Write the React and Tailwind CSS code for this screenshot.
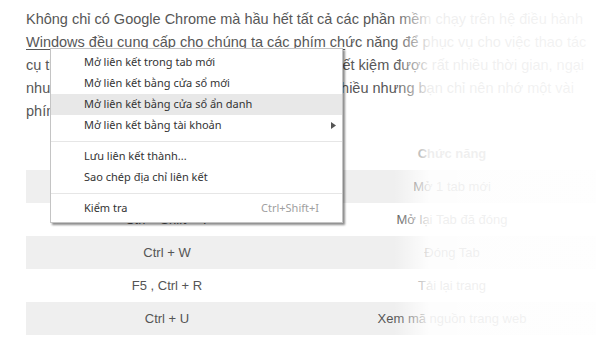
const lines = [
  'Không chỉ có Google Chrome mà hầu hết tất cả các phần mềm chạy trên hệ điều hành',
  null,
  'cụ thể hơn, nhanh chóng hơn và cũng giúp bạn tiết kiệm được rất nhiều thời gian, ngại',
  'nhu cầu sử dụng phím tắt của mỗi người có rất nhiều nhưng bạn chỉ nên nhớ một vài',
  'phím tắt dưới đây:',
]

const rows = [
  ['Ctrl + T', 'Mở 1 tab mới'],
  ['Ctrl + Shift + T', 'Mở lại Tab đã đóng'],
  ['Ctrl + W', 'Đóng Tab'],
  ['F5 , Ctrl + R', 'Tải lại trang'],
  ['Ctrl + U', 'Xem mã nguồn trang web'],
]

const menu = [
  { label: 'Mở liên kết trong tab mới' },
  { label: 'Mở liên kết bằng cửa sổ mới' },
  { label: 'Mở liên kết bằng cửa sổ ẩn danh', active: true },
  { label: 'Mở liên kết bằng tài khoản', sub: true },
  { sep: true },
  { label: 'Lưu liên kết thành...' },
  { label: 'Sao chép địa chỉ liên kết' },
  { sep: true },
  { label: 'Kiểm tra', hint: 'Ctrl+Shift+I' },
]

function ContextMenu() {
  return (
    <div className="absolute left-[50px] top-[48px] w-[293px] bg-white border border-[#c4c4c4] shadow-[2px_2px_2px_rgba(0,0,0,0.45)] py-[3px] font-['Noto_Sans',sans-serif] text-[11px] text-[#333]">
      {menu.map((item, i) =>
        item.sep ? (
          <div key={i} className="h-[10px] flex items-center">
            <div className="h-px w-full bg-[#e6e6e6]" />
          </div>
        ) : (
          <div
            key={i}
            className={`h-[21px] flex items-center pl-[33px] ${item.active ? 'bg-[#e8e8e8]' : ''}`}
          >
            <span className="flex-1">{item.label}</span>
            {item.hint && <span className="text-[#a0a0a0] pr-[23px]">{item.hint}</span>}
            {item.sub && (
              <svg width="5" height="7" viewBox="0 0 5 7" className="mr-[6px]">
                <path d="M0 0 L5 3.5 L0 7 Z" fill="#555" />
              </svg>
            )}
          </div>
        )
      )}
    </div>
  )
}

export default function App() {
  return (
    <div className="relative w-[600px] h-[339px] overflow-hidden bg-white font-['Liberation_Sans',Arial,sans-serif]">
      {/* article text */}
      <div className="pt-[8px] px-[26px] text-[14.5px] leading-[23px] text-[#575757]">
        {lines.map((line, i) =>
          line === null ? (
            <div key={i} className="whitespace-nowrap">
              <span className="underline underline-offset-2">Windows đều cung cấp cho chúng ta các phím ch</span>
              ức năng để phục vụ cho việc thao tác
            </div>
          ) : (
            <div key={i} className="whitespace-nowrap">{line}</div>
          )
        )}
      </div>

      {/* shortcut table */}
      <div className="mt-[14px] ml-[26px] w-[570px] text-[13px] text-[#555]">
        <div className="grid grid-cols-[282px_1fr] h-[33px] items-center text-center font-bold">
          <span>Phím tắt</span>
          <span>Chức năng</span>
        </div>
        {rows.map(([keys, desc], i) => (
          <div
            key={keys}
            className={`grid grid-cols-[282px_1fr] h-[33px] items-center text-center ${i % 2 === 0 ? 'bg-[#efefef]' : ''}`}
          >
            <span>{keys}</span>
            <span>{desc}</span>
          </div>
        ))}
      </div>

      {/* fade to white on the right */}
      <div className="absolute inset-0 pointer-events-none bg-[linear-gradient(to_right,rgba(255,255,255,0)_394px,rgba(255,255,255,0.9)_430px,rgba(255,255,255,0.93)_600px)]" />

      <ContextMenu />
    </div>
  )
}
